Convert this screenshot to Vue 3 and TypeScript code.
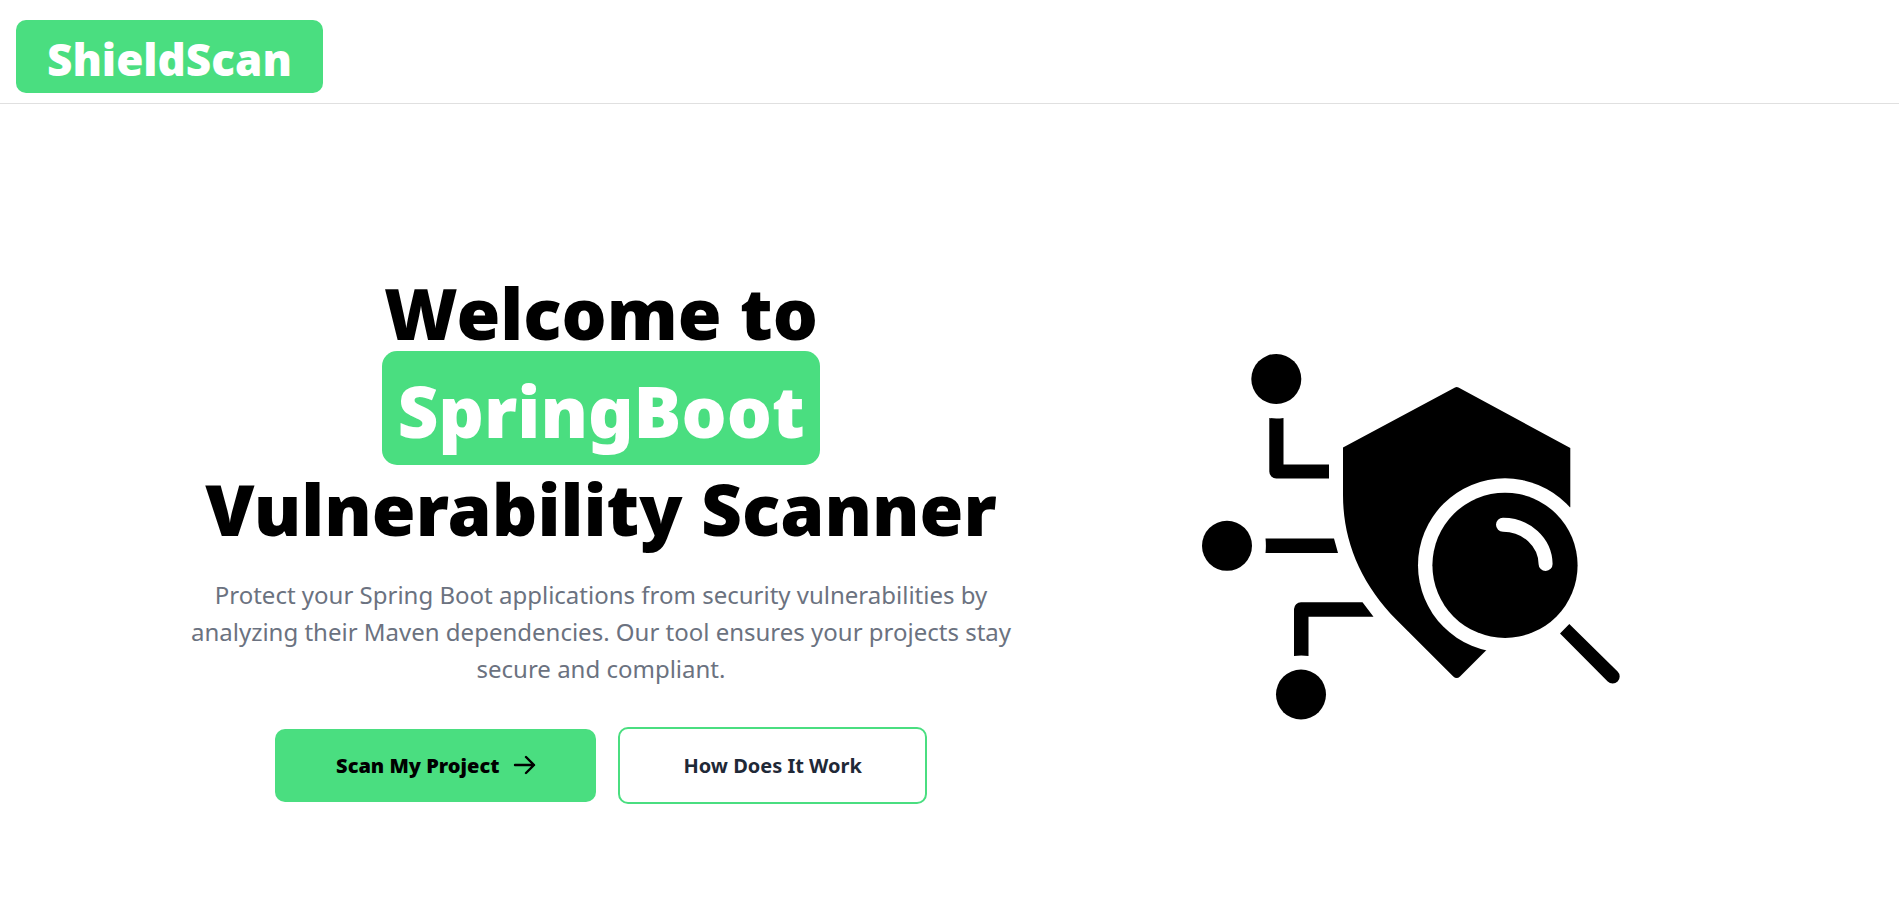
<script setup lang="ts">
interface Node {
  cx: number
  cy: number
}

const nodes: Node[] = [
  { cx: 86.3, cy: 39 },
  { cx: 37, cy: 205.8 },
  { cx: 111, cy: 354.5 },
]

const links: string[] = [
  'M79.3 78Q86.3 79 93.5 78V124.5H139V138.5H86.3A7 7 0 0 1 79.3 131.5Z',
  'M75.5 198.6H144L148 213H75.5Q76.3 205.8 75.5 198.6Z',
  'M104 316V269A7 7 0 0 1 111 262.2H172.5L183.5 276.7H118.5V316Q111.2 315 104 316Z',
]
</script>

<template>
  <div class="page">
    <header class="header">
      <a class="logo" href="#">ShieldScan</a>
    </header>

    <main class="hero">
      <section class="intro">
        <h1 class="title">
          Welcome to<br />
          <span class="highlight">SpringBoot</span><br />
          Vulnerability Scanner
        </h1>
        <p class="lead">
          Protect your Spring Boot applications from security vulnerabilities by analyzing
          their Maven dependencies. Our tool ensures your projects stay secure and compliant.
        </p>
        <div class="actions">
          <button class="btn primary" type="button">
            Scan My Project
            <svg class="arrow" viewBox="0 0 24 24" aria-hidden="true">
              <path d="M2 11H21M13 3L21 11L13 19" />
            </svg>
          </button>
          <button class="btn outline" type="button">How Does It Work</button>
        </div>
      </section>

      <svg class="art" viewBox="12 14 418 366" role="img" aria-label="Shield and magnifier">
        <circle v-for="n in nodes" :key="n.cy" :cx="n.cx" :cy="n.cy" r="25" />
        <path v-for="d in links" :key="d" :d="d" />
        <path
          d="M265 47.500Q266.700 46.500 268.500 47.500L380.300 108V167L314 292.500L270 336.500Q266.700 339.500 263.300 336.500L206.700 280C170 243 153 200 153 155V107.500Z"
        />
        <circle class="gap" cx="315" cy="225.300" r="87" />
        <circle cx="315" cy="225.300" r="72.600" />
        <path class="glare" d="M313 184.700A42.500 40 0 0 1 355.600 224" />
        <path d="M370 293.400L379.300 284L427.600 331.500A7 7 0 0 1 417.700 341.500Z" />
      </svg>
    </main>
  </div>
</template>

<style>
body {
  margin: 0;
  background: #fff;
}
</style>

<style scoped>
.page {
  min-height: 100vh;
  font-family: "Noto Sans", "Open Sans", sans-serif;
  color: #000;
}

.header {
  display: flex;
  padding: 20px 16px 10px;
  border-bottom: 1px solid #e0e0e0;
}

.logo {
  padding: 9px 31px 4px;
  border-radius: 10px;
  background: #4ade80;
  color: #fff;
  font-size: 44px;
  font-weight: 900;
  line-height: 60px;
  text-decoration: none;
}

.hero {
  display: grid;
  grid-template-columns: minmax(0, 1202fr) minmax(0, 697fr);
  align-items: center;
  padding: 160px 0 80px;
}

.intro {
  display: flex;
  flex-direction: column;
  align-items: center;
  text-align: center;
}

.title {
  margin: 0;
  font-size: 71px;
  font-weight: 900;
  line-height: 98px;
}

.highlight {
  padding: 11px 15px 6px;
  border-radius: 15px;
  background: #4ade80;
  color: #fff;
}

.lead {
  max-width: 860px;
  margin: 18px 0 0;
  color: #6b7280;
  font-size: 24px;
  line-height: 37px;
}

.actions {
  display: flex;
  align-items: center;
  gap: 22px;
  margin-top: 40px;
}

.btn {
  display: flex;
  align-items: center;
  justify-content: center;
  gap: 14px;
  border-radius: 10px;
  font-family: inherit;
  font-size: 20px;
  line-height: 29px;
  cursor: pointer;
}

.primary {
  padding: 22px 59px 22px 61px;
  border: 0;
  background: #4ade80;
  color: #000;
  font-weight: 900;
}

.outline {
  padding: 22px 63px;
  border: 2px solid #4ade80;
  background: #fff;
  color: #1f2937;
  font-weight: 700;
}

.arrow {
  width: 24px;
  height: 24px;
  fill: none;
  stroke: #000;
  stroke-width: 2.4;
  stroke-linecap: round;
  stroke-linejoin: round;
}

.art {
  width: 100%;
  max-width: 418px;
  margin-top: 6px;
}

.gap {
  fill: #fff;
}

.glare {
  fill: none;
  stroke: #fff;
  stroke-width: 14;
  stroke-linecap: round;
}
</style>
